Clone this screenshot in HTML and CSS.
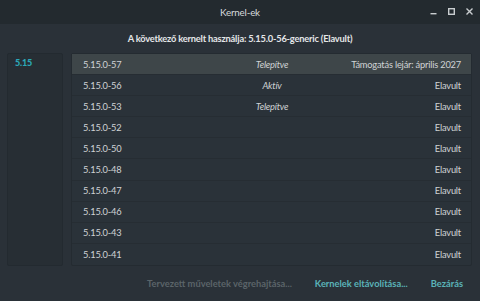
FILE: index.html
```html
<!DOCTYPE html>
<html lang="hu">
<head>
<meta charset="utf-8">
<link rel="stylesheet" href="styles.css">
</head>
<body>
<div class="window">
  <div class="titlebar">
    <span class="title">Kernel-ek</span>
    <div class="controls">
      <svg width="9" height="9" viewBox="0 0 9 9"><rect x="1.5" y="6" width="6" height="1.4" fill="#c9cdd0"/></svg>
      <svg width="9" height="9" viewBox="0 0 9 9"><rect x="1.7" y="1.7" width="5.6" height="5.6" fill="none" stroke="#c9cdd0" stroke-width="1.4"/></svg>
      <svg width="9" height="9" viewBox="0 0 9 9"><path d="M1.5 1.5 L7.5 7.5 M7.5 1.5 L1.5 7.5" stroke="#c9cdd0" stroke-width="1.4"/></svg>
    </div>
  </div>
  <div class="header">A következő kernelt használja: 5.15.0-56-generic (Elavult)</div>
  <div class="main">
    <div class="sidebar"><div class="series">5.15</div></div>
    <div class="list">
      <div class="row sel"><span class="ver">5.15.0-57</span><span class="status">Telepítve</span><span class="support">Támogatás lejár: április 2027</span></div>
      <div class="row"><span class="ver">5.15.0-56</span><span class="status">Aktív</span><span class="support">Elavult</span></div>
      <div class="row"><span class="ver">5.15.0-53</span><span class="status">Telepítve</span><span class="support">Elavult</span></div>
      <div class="row"><span class="ver">5.15.0-52</span><span class="status"></span><span class="support">Elavult</span></div>
      <div class="row"><span class="ver">5.15.0-50</span><span class="status"></span><span class="support">Elavult</span></div>
      <div class="row"><span class="ver">5.15.0-48</span><span class="status"></span><span class="support">Elavult</span></div>
      <div class="row"><span class="ver">5.15.0-47</span><span class="status"></span><span class="support">Elavult</span></div>
      <div class="row"><span class="ver">5.15.0-46</span><span class="status"></span><span class="support">Elavult</span></div>
      <div class="row"><span class="ver">5.15.0-43</span><span class="status"></span><span class="support">Elavult</span></div>
      <div class="row last"><span class="ver">5.15.0-41</span><span class="status"></span><span class="support">Elavult</span></div>
    </div>
  </div>
  <div class="buttons">
    <span class="btn disabled">Tervezett műveletek végrehajtása...</span>
    <span class="btn">Kernelek eltávolítása...</span>
    <span class="btn">Bezárás</span>
  </div>
</div>
</body>
</html>
```
FILE: styles.css
```css
* { box-sizing: border-box; }
html, body { margin: 0; padding: 0; }
body {
  width: 480px;
  height: 301px;
  background: #2a3138;
  font-family: "Lato", "Noto Sans", sans-serif;
  font-size: 9.3px;
  letter-spacing: -0.2px;
  color: #d3d6d8;
  overflow: hidden;
}
.window { display: flex; flex-direction: column; height: 301px; }
.titlebar {
  height: 24px;
  background: #232a2f;
  display: flex;
  align-items: center;
  justify-content: center;
  position: relative;
  color: #d6d9db;
  font-size: 9.8px;
}
.controls {
  position: absolute;
  right: 6px;
  top: 7px;
  display: flex;
  gap: 9px;
}
.controls svg { display: block; }
.header {
  height: 29px;
  display: flex;
  align-items: center;
  justify-content: center;
  font-weight: bold;
  color: #e4e6e8;
  font-size: 9.3px;
}
.main {
  display: flex;
  gap: 8px;
  padding: 0 8px 0 7px;
  height: 213px;
}
.sidebar {
  width: 56px;
  background: #272e34;
  border: 1px solid #232a30;
  border-radius: 2px;
  padding: 3px 0 0 7px;
}
.series { color: #2ba8b8; font-weight: 900; font-size: 9px; }
.list {
  flex: 1;
  background: #2a3239;
  border: 1px solid #242b31;
  border-radius: 2px;
  display: flex;
  flex-direction: column;
}
.row {
  height: 21.1px;
  display: grid;
  grid-template-columns: 1fr 1fr 1fr;
  align-items: center;
  padding: 0 10px 0 11px;
  border-bottom: 1px solid #262d33;
  color: #d0d3d5;
}
.row.last { border-bottom: none; }
.row.sel { background: #3e4649; }
.status { text-align: center; font-style: italic; }
.support { text-align: right; }
.buttons {
  flex: 1;
  display: flex;
  justify-content: flex-end;
  align-items: center;
  gap: 23px;
  padding: 0 17px 0 0;
  font-weight: bold;
  letter-spacing: 0;
  color: #5ab3b8;
}
.btn.disabled { color: #5b6469; }
```
